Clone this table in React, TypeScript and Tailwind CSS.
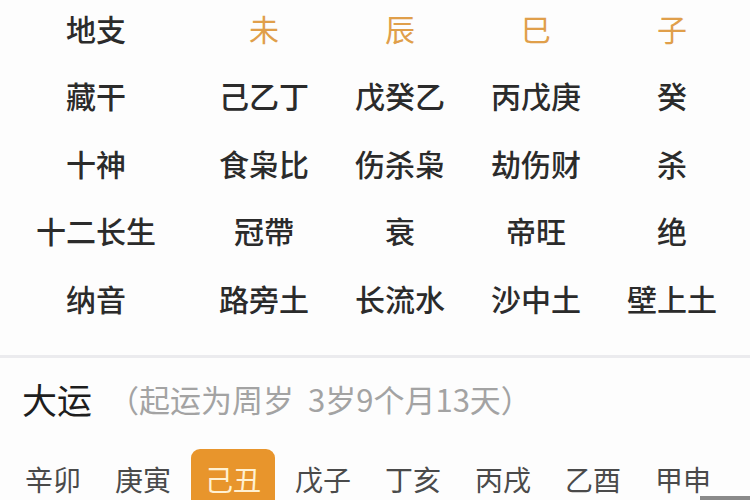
import React from "react";

const font = { fontFamily: '"Noto Sans CJK SC", "Noto Sans", sans-serif' };

const rows: { label: string; cells: string[]; header?: boolean }[] = [
  { label: "地支", cells: ["未", "辰", "巳", "子"], header: true },
  { label: "藏干", cells: ["己乙丁", "戊癸乙", "丙戊庚", "癸"] },
  { label: "十神", cells: ["食枭比", "伤杀枭", "劫伤财", "杀"] },
  { label: "十二长生", cells: ["冠帶", "衰", "帝旺", "绝"] },
  { label: "纳音", cells: ["路旁土", "长流水", "沙中土", "壁上土"] },
];

const dayun = ["辛卯", "庚寅", "己丑", "戊子", "丁亥", "丙戌", "乙酉", "甲申"];

export default function App() {
  return (
    <div
      className="relative w-[750px] h-[500px] overflow-hidden bg-[#FDFDFD]"
      style={font}
    >
      <div className="grid grid-cols-[196px_repeat(4,136px)] -mt-[6px]">
        {rows.map((r) => (
          <React.Fragment key={r.label}>
            <div className="h-[67.5px] flex items-center justify-center pr-[4px] text-[30px] font-medium leading-none text-[#2b2b2b]">
              {r.label}
            </div>
            {r.cells.map((c, i) => (
              <div
                key={i}
                className={
                  r.header
                    ? "h-[67.5px] flex items-center justify-center text-[30px] leading-none text-[#E09F4A]"
                    : "h-[67.5px] flex items-center justify-center text-[30px] font-medium leading-none text-[#2b2b2b]"
                }
              >
                {c}
              </div>
            ))}
          </React.Fragment>
        ))}
      </div>

      <div className="mt-[23px] h-[3px] bg-[#EBEBEE]" />

      <div className="mt-[11px] h-[60px] flex items-center pl-[22px]">
        <span className="text-[35px] leading-none text-[#1e1e1e]">大运</span>
        <span className="ml-[16px] text-[31px] leading-none text-[#A3A3A3]">
          （起运为周岁<span className="ml-[14px]">3岁9个月13天）</span>
        </span>
      </div>

      <div className="mt-[20px] flex gap-[6px] pl-[11px]">
        {dayun.map((d, i) => (
          <div
            key={d}
            className={
              i === 2
                ? "w-[84px] h-[60px] flex items-center justify-center rounded-[9px] bg-[#E8952C] text-[28px] leading-none text-[#FFF1D2]"
                : "w-[84px] h-[60px] flex items-center justify-center text-[28px] leading-none text-[#4a4a4a]"
            }
          >
            {d}
          </div>
        ))}
      </div>

      <div className="absolute right-0 bottom-0 w-[50px] h-[4px] bg-[#8A8A8A]" />
    </div>
  );
}
